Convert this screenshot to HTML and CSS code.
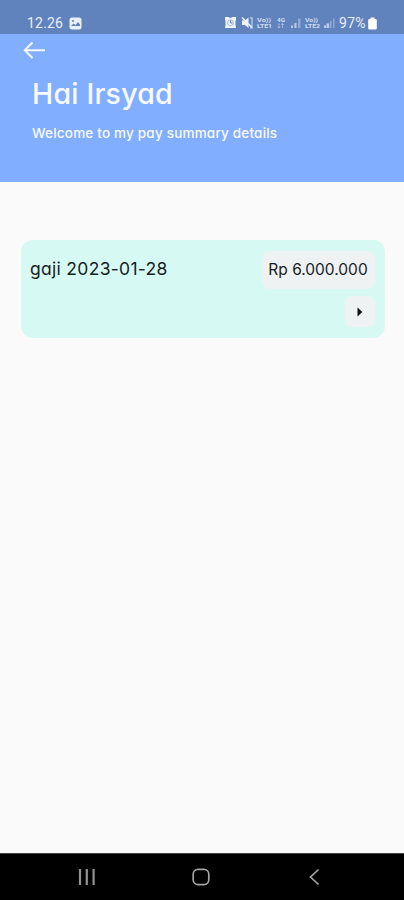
FILE: index.html
```html
<!DOCTYPE html>
<html lang="id">
<head>
    <meta charset="UTF-8">
    <meta name="viewport" content="width=device-width, initial-scale=1.0">
    <title>Pay Summary</title>
    <link rel="stylesheet" href="styles.css">
</head>
<body>
    <div class="status-bar">
        <span class="clock">12.26</span>
        <svg class="picture-icon" width="13" height="13" viewBox="0 0 13 13">
            <rect x="0.5" y="0.5" width="12" height="12" rx="2.5" fill="#e9effc"/>
            <circle cx="4" cy="4" r="1" fill="#6083bd"/>
            <path d="M2 9 L4.5 6.5 L6.5 8 L9 5 L11 7.5 V9 Z" fill="#6083bd"/>
        </svg>
        <svg class="status-icons" width="110" height="14" viewBox="0 0 110 14">
            <!-- alarm -->
            <path d="M0 1 H3.5 L4.5 1.8 H6.5 L7.5 1 H11 V4 L10.5 5 V9 L11 12 H0 L0.5 9 V5 L0 4 Z" fill="#eef3fc"/>
            <circle cx="5.5" cy="6.8" r="3" fill="none" stroke="#8ea8d6" stroke-width="0.8"/>
            <path d="M5.5 4.6 V7 H7.5" fill="none" stroke="#6083bd"/>
            <!-- muted -->
            <path d="M17 4.5 H20 L23.5 1.5 V12 L20 9 H17 Z" fill="#eef3fc"/>
            <path d="M25 2 H27 V12 H25" fill="none" stroke="#b4c5e5" stroke-width="1.4"/>
            <path d="M17 1.5 L27 11.5" stroke="#eef3fc" stroke-width="1.5"/>
            <g class="tiny">
                <text x="32" y="5.6" textLength="14" lengthAdjust="spacingAndGlyphs">Vo))</text>
                <text x="32" y="12.4" textLength="15" lengthAdjust="spacingAndGlyphs">LTE1</text>
                <text x="52" y="5.8" textLength="8" lengthAdjust="spacingAndGlyphs">4G</text>
                <text x="80" y="5.6" textLength="13" lengthAdjust="spacingAndGlyphs">Vo))</text>
                <text x="80" y="12.4" textLength="15" lengthAdjust="spacingAndGlyphs">LTE2</text>
            </g>
            <path d="M54 7.5 V12 M52.8 10.5 L54 12 L55.2 10.5 M57.5 12 V7.5 M56.3 9 L57.5 7.5 L58.7 9" fill="none" stroke="#bccbe9" stroke-width="0.7"/>
            <!-- signal -->
            <path d="M66 9.5 H68 V12 H66 Z M69.5 7 H71.5 V12 H69.5 Z M99 9.5 H101 V12 H99 Z M101.5 7.5 H104 V12 H101.5 Z" fill="#bccbe9"/>
            <path d="M73 2.5 H75.5 V12 H73 Z M104.7 5 H106.5 V12 H104.7 Z M108 2.5 H109.5 V12 H108 Z" fill="#8fa9d6"/>
        </svg>
        <span class="battery-text">97%</span>
        <svg class="battery-icon" width="9" height="13" viewBox="0 0 9 13">
            <path d="M2.5 0.5 H6.5 V2 H7.5 Q8.8 2 8.8 3.3 V11.2 Q8.8 12.5 7.5 12.5 H1.5 Q0.2 12.5 0.2 11.2 V3.3 Q0.2 2 1.5 2 H2.5 Z" fill="#fff"/>
        </svg>
    </div>

    <header class="header">
        <a class="back" href="#" aria-label="Kembali">
            <svg width="24" height="20" viewBox="0 0 24 20">
                <path d="M22 10.3 H2 M9.5 2.5 L1.7 10.3 L9.5 18" fill="none" stroke="#f4f8ff" stroke-width="2"/>
            </svg>
        </a>
        <h1>Hai Irsyad</h1>
        <p>Welcome to my pay summary details</p>
    </header>

    <main class="content">
        <div class="card">
            <div class="card-title">gaji 2023-01-28</div>
            <div class="card-side">
                <div class="amount">Rp 6.000.000</div>
                <button class="detail" aria-label="Detail">
                    <svg width="6" height="10" viewBox="0 0 6 10">
                        <path d="M0.5 0.5 L5.3 5 L0.5 9.5 Z" fill="#111"/>
                    </svg>
                </button>
            </div>
        </div>
    </main>

    <nav class="nav-bar">
        <svg width="18" height="18" viewBox="0 0 18 18">
            <path d="M2 1 V17 M8.8 1 V17 M15.6 1 V17" stroke="#929292" stroke-width="2.2"/>
        </svg>
        <svg width="18" height="18" viewBox="0 0 18 18">
            <rect x="1.2" y="1.4" width="15.6" height="15.2" rx="4.8" fill="none" stroke="#a4a4a4" stroke-width="1.7"/>
        </svg>
        <svg width="18" height="18" viewBox="0 0 18 18">
            <path d="M12.5 1.5 L4.5 9 L12.5 16.5" fill="none" stroke="#a4a4a4" stroke-width="1.7"/>
        </svg>
    </nav>
</body>
</html>
```

FILE: styles.css
```css
* {
    box-sizing: border-box;
}
body {
    margin: 0;
    height: 900px;
    display: flex;
    flex-direction: column;
    font-family: Inter, "Open Sans", sans-serif;
    font-feature-settings: "cv11";
    background-color: #fafafa;
    color: #17211f;
    overflow: hidden;
}
h1, p {
    margin: 0;
}
svg {
    display: block;
    flex: none;
}
.status-bar {
    height: 34px;
    padding: 12px 27px 0;
    display: flex;
    align-items: center;
    background-color: #6083bd;
    color: #e9effc;
    font-family: Roboto, sans-serif;
    font-size: 14px;
    line-height: 22px;
}
.clock {
    width: 36px;
    letter-spacing: 0.2px;
}
.picture-icon {
    margin-left: 6px;
}
.status-icons {
    margin-left: auto;
}
.tiny {
    font-size: 5.5px;
    font-weight: 700;
    fill: #d2ddf2;
}
.battery-text {
    margin-left: 4px;
    width: 29px;
    letter-spacing: 0.3px;
}
.header {
    height: 148px;
    padding: 6px 32px 0;
    background-color: #82aeff;
    color: #f8faff;
}
.back {
    display: block;
    width: 24px;
    margin-left: -9px;
}
.header h1 {
    margin-top: 16px;
    font-size: 28.5px;
    font-weight: 500;
    line-height: 36px;
    letter-spacing: 0.2px;
}
.header p {
    margin-top: 11px;
    font-size: 13.5px;
    font-weight: 500;
    line-height: 20px;
    letter-spacing: 0.2px;
    white-space: nowrap;
}
.content {
    flex: 1;
    padding: 58px 19px 0 21px;
}
.card {
    height: 98px;
    padding: 11px 10px 0 9px;
    display: flex;
    justify-content: space-between;
    background-color: #d6faf3;
    border-radius: 12px;
}
.card-title {
    font-size: 17.5px;
    line-height: 36px;
    letter-spacing: 0.3px;
}
.card-side {
    display: flex;
    flex-direction: column;
    align-items: flex-end;
    gap: 7px;
}
.amount {
    width: 113px;
    height: 38px;
    padding-right: 1px;
    background-color: #eef2f3;
    border-radius: 8px;
    font-size: 15.5px;
    line-height: 37px;
    text-align: center;
}
.detail {
    width: 30px;
    height: 31px;
    padding: 0;
    display: flex;
    align-items: center;
    justify-content: center;
    background-color: #eef2f3;
    border: none;
    border-radius: 7px;
}
.nav-bar {
    height: 47px;
    padding: 0 80px 0 78px;
    display: flex;
    align-items: center;
    justify-content: space-between;
    background-color: #000;
    border-top: 1px solid #444;
}
```
